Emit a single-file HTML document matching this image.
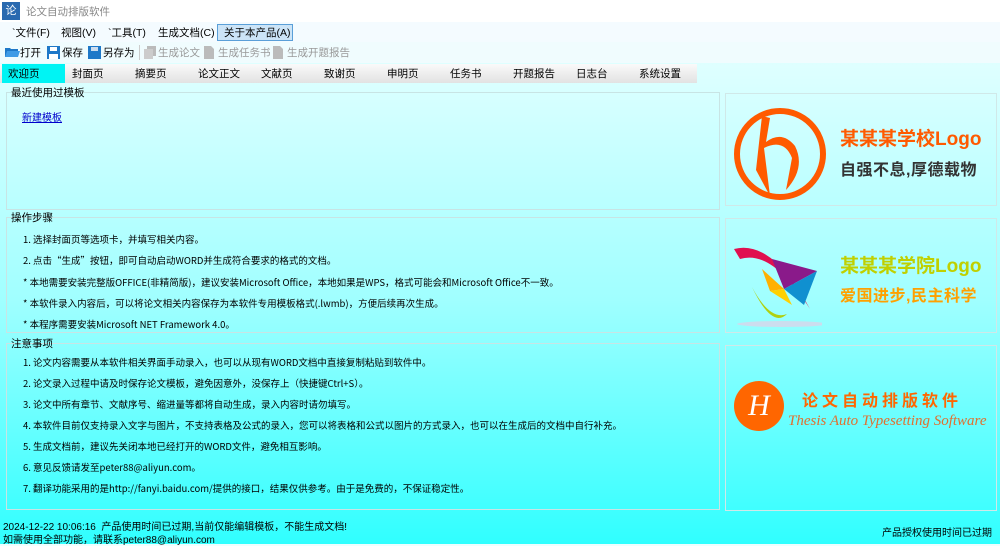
<!DOCTYPE html>
<html><head><meta charset="utf-8"><style>
*{margin:0;padding:0;box-sizing:border-box}
body{width:1000px;height:544px;overflow:hidden;font-family:"Liberation Sans","Noto Sans CJK SC",sans-serif;font-size:11px;color:#000;position:relative;background:linear-gradient(#eefefe 0px,#d8ffff 90px,#a0ffff 300px,#30ffff 544px);}
.abs{position:absolute;white-space:nowrap}
#title{left:0;top:0;width:1000px;height:22px;background:#fff}
#menu{left:0;top:22px;width:1000px;height:20px;background:#f4fbff}
#tool{left:0;top:42px;width:1000px;height:21px;background:#f0fcfe}
.mi{position:absolute;top:3px;font-size:10.5px}
.tabs{left:0;top:64px;width:697px;height:19px;background:linear-gradient(#fafafa,#e2e2e2)}
.tab{position:absolute;top:2px;font-size:10.5px}
.gb{position:absolute;border:1px solid #c8e4e4}
.gl{position:absolute;top:-8px;left:4px;font-size:10.5px}
.ln{position:absolute;left:16px;font-size:9.5px;font-family:"Noto Sans CJK SC","Liberation Mono",monospace;white-space:nowrap}
.pn{position:absolute;border:1px solid #d0e8e8}
.lg{position:absolute;left:114px;font-weight:bold;white-space:nowrap}
</style></head><body>
<div id="title" class="abs">
 <div class="abs" style="left:2px;top:2px;width:18px;height:18px;background:#2a6ab0;color:#fff;font-size:11px;text-align:center;line-height:18px">论</div>
 <div class="abs" style="left:26px;top:4px;color:#888;font-size:10.5px">论文自动排版软件</div>
</div>
<div id="menu" class="abs">
 <span class="mi" style="left:12px">`文件(F)</span>
 <span class="mi" style="left:61px">视图(V)</span>
 <span class="mi" style="left:108px">`工具(T)</span>
 <span class="mi" style="left:158px">生成文档(C)</span>
 <div class="abs" style="left:217px;top:2px;width:76px;height:17px;background:#cce4f7;border:1px solid #5a9fd8"></div>
 <span class="mi" style="left:224px">关于本产品(A)</span>
</div>
<div id="tool" class="abs">
 <svg class="abs" style="left:5px;top:4px" width="15" height="12"><path d="M0 2h5l1 1h7v8H0z" fill="#1e78c8"/><path d="M2 5h13l-2 6H0z" fill="#3f9be6"/></svg>
 <span class="mi" style="left:20px">打开</span>
 <svg class="abs" style="left:47px;top:4px" width="13" height="13"><rect width="13" height="13" fill="#1e78c8"/><rect x="3" y="1" width="7" height="4" fill="#fff"/><rect x="2" y="8" width="9" height="5" fill="#fff"/></svg>
 <span class="mi" style="left:62px">保存</span>
 <svg class="abs" style="left:88px;top:4px" width="13" height="13"><rect width="13" height="13" fill="#1e78c8"/><rect x="3" y="1" width="7" height="4" fill="#cde"/></svg>
 <span class="mi" style="left:103px">另存为</span>
 <div class="abs" style="left:139px;top:3px;width:1px;height:15px;background:#ccc"></div>
 <svg class="abs" style="left:144px;top:4px" width="12" height="13"><rect x="3" width="9" height="10" fill="#bbb"/><rect y="3" width="9" height="10" fill="#ccc"/></svg>
 <span class="mi" style="left:158px;color:#999">生成论文</span>
 <svg class="abs" style="left:204px;top:4px" width="10" height="13"><path d="M0 0h7l3 3v10H0z" fill="#bbb"/></svg>
 <span class="mi" style="left:218px;color:#999">生成任务书</span>
 <svg class="abs" style="left:273px;top:4px" width="10" height="13"><path d="M0 0h7l3 3v10H0z" fill="#bbb"/></svg>
 <span class="mi" style="left:287px;color:#999">生成开题报告</span>
</div>
<div class="abs tabs">
 <div class="abs" style="left:2px;top:0;width:63px;height:19px;background:#00f4f4"></div>
 <span class="tab" style="left:8px">欢迎页</span>
 <span class="tab" style="left:72px">封面页</span>
 <span class="tab" style="left:135px">摘要页</span>
 <span class="tab" style="left:198px">论文正文</span>
 <span class="tab" style="left:261px">文献页</span>
 <span class="tab" style="left:324px">致谢页</span>
 <span class="tab" style="left:387px">申明页</span>
 <span class="tab" style="left:450px">任务书</span>
 <span class="tab" style="left:513px">开题报告</span>
 <span class="tab" style="left:576px">日志台</span>
 <span class="tab" style="left:639px">系统设置</span>
</div>

<div class="gb" style="left:6px;top:92px;width:714px;height:118px"><span class="gl" style="left:4px">最近使用过模板</span>
 <span class="abs" style="left:15px;top:16px;font-size:10px;color:#00c;text-decoration:underline">新建模板</span></div>
<div class="gb" style="left:6px;top:217px;width:714px;height:116px"><span class="gl">操作步骤</span>
 <span class="ln" style="top:14px">1. 选择封面页等选项卡，并填写相关内容。</span>
 <span class="ln" style="top:35px">2. 点击“生成”按钮，即可自动启动WORD并生成符合要求的格式的文档。</span>
 <span class="ln" style="top:57px">* 本地需要安装完整版OFFICE(非精简版)，建议安装Microsoft Office，本地如果是WPS，格式可能会和Microsoft Office不一致。</span>
 <span class="ln" style="top:78px">* 本软件录入内容后，可以将论文相关内容保存为本软件专用模板格式(.lwmb)，方便后续再次生成。</span>
 <span class="ln" style="top:99px">* 本程序需要安装Microsoft NET Framework 4.0。</span>
</div>
<div class="gb" style="left:6px;top:343px;width:714px;height:167px"><span class="gl">注意事项</span>
 <span class="ln" style="top:11px">1. 论文内容需要从本软件相关界面手动录入，也可以从现有WORD文档中直接复制粘贴到软件中。</span>
 <span class="ln" style="top:32px">2. 论文录入过程中请及时保存论文模板，避免因意外，没保存上（快捷键Ctrl+S）。</span>
 <span class="ln" style="top:53px">3. 论文中所有章节、文献序号、缩进量等都将自动生成，录入内容时请勿填写。</span>
 <span class="ln" style="top:74px">4. 本软件目前仅支持录入文字与图片，不支持表格及公式的录入，您可以将表格和公式以图片的方式录入，也可以在生成后的文档中自行补充。</span>
 <span class="ln" style="top:95px">5. 生成文档前，建议先关闭本地已经打开的WORD文件，避免相互影响。</span>
 <span class="ln" style="top:116px">6. 意见反馈请发至peter88@aliyun.com。</span>
 <span class="ln" style="top:137px">7. 翻译功能采用的是http://fanyi.baidu.com/提供的接口，结果仅供参考。由于是免费的，不保证稳定性。</span>
</div>

<div class="pn" style="left:725px;top:93px;width:272px;height:113px">
 <svg class="abs" style="left:6px;top:12px" width="96" height="96"><circle cx="48" cy="48" r="43" fill="none" stroke="#ff5a00" stroke-width="6"/><path d="M30 10 L24 64 L38 90 L32 42 Q52 32 60 52 L54 84 Q74 62 63 40 Q50 24 34 36 L38 12z" fill="#ff5a00"/></svg>
 <span class="lg" style="top:30px;font-size:19px;color:#ff5a00">某某某学校Logo</span>
 <span class="lg" style="top:62px;font-size:16px;color:#333;letter-spacing:0.5px">自强不息,厚德载物</span>
</div>
<div class="pn" style="left:725px;top:218px;width:272px;height:115px">
 <svg class="abs" style="left:6px;top:10px" width="90" height="100"><path d="M2 20 Q40 10 78 80 Q40 20 8 30z" fill="#e01050"/><path d="M40 30 L85 42 L52 60z" fill="#8a1a8a"/><path d="M52 60 L85 42 L72 76z" fill="#1090d0"/><path d="M30 40 L52 60 L38 62z" fill="#ffb000"/><path d="M38 62 L52 60 L60 76z" fill="#ffd000"/><path d="M20 58 Q40 100 55 85 Q38 92 20 58z" fill="#b0d010"/><ellipse cx="50" cy="95" rx="45" ry="3" fill="#cde"/></svg>
 <span class="lg" style="top:32px;font-size:19px;color:#c0d000">某某某学院Logo</span>
 <span class="lg" style="top:63px;font-size:16px;color:#ffa000;letter-spacing:0.5px">爱国进步,民主科学</span>
</div>
<div class="pn" style="left:725px;top:345px;width:272px;height:166px">
 <div class="abs" style="left:8px;top:35px;width:50px;height:50px;border-radius:50%;background:#ff6600;color:#fff;font:italic 30px 'Liberation Serif',serif;text-align:center;line-height:50px">H</div>
 <span class="abs" style="left:76px;top:41px;font-size:16px;color:#ff6600;font-weight:bold;letter-spacing:4px">论文自动排版软件</span>
 <span class="abs" style="left:62px;top:67px;font:italic 15px 'Liberation Serif',serif;color:#e07030">Thesis Auto Typesetting Software</span>
</div>

<span class="abs" style="left:3px;top:518px;font-size:10px">2024-12-22 10:06:16&nbsp; 产品使用时间已过期,当前仅能编辑模板，不能生成文档!</span>
<span class="abs" style="left:3px;top:531px;font-size:10px">如需使用全部功能，请联系peter88@aliyun.com</span>
<span class="abs" style="left:882px;top:524px;font-size:10px">产品授权使用时间已过期</span>
</body></html>
